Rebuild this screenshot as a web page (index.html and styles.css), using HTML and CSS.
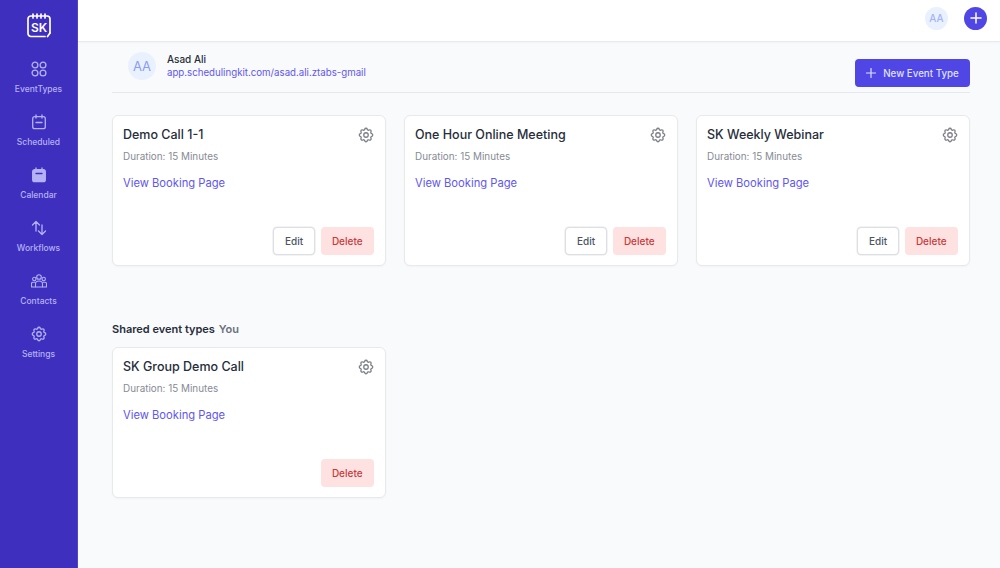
FILE: index.html
```html
<!DOCTYPE html>
<html lang="en">
<head>
<meta charset="utf-8">
<title>Event Types</title>
<link rel="stylesheet" href="styles.css">
</head>
<body>
<div class="app">
  <aside class="sidebar">
    <svg class="logo" width="26" height="26" viewBox="0 0 26 26" fill="none" stroke="#fff" stroke-width="1.700" stroke-linecap="round" stroke-linejoin="round">
      <path d="M19 23.500H5a3 3 0 0 1-3-3V6a3 3 0 0 1 3-3h16a3 3 0 0 1 3 3v14"/>
      <path d="M7 1v4M11 1v4M15 1v4M19 1v4"/>
      <path d="M24 20l-2.500 3.500"/>
      <text x="13" y="18.800" text-anchor="middle" class="logo-text">SK</text>
    </svg>
    <nav class="nav">
      <a class="nav-item">
        <svg width="16" height="16" viewBox="0 0 16 16" fill="none" stroke="currentColor" stroke-width="1.300"><circle cx="4" cy="4" r="2.900"/><circle cx="12" cy="4" r="2.900"/><circle cx="4" cy="12" r="2.900"/><circle cx="12" cy="12" r="2.900"/></svg>
        <span>EventTypes</span>
      </a>
      <a class="nav-item">
        <svg width="16" height="16" viewBox="0 0 16 16" fill="none" stroke="currentColor" stroke-width="1.300" stroke-linecap="round"><rect x="1.700" y="2.700" width="12.600" height="12" rx="2"/><path d="M5 1v3M11 1v3M5 8.500h6"/></svg>
        <span>Scheduled</span>
      </a>
      <a class="nav-item">
        <svg width="16" height="16" viewBox="0 0 16 16" fill="currentColor" stroke="currentColor" stroke-width="1.300" stroke-linecap="round"><rect x="1.700" y="2.700" width="12.600" height="12" rx="2"/><path d="M5 1v3M11 1v3"/><path d="M5 6.500h6" stroke="#3f2fbf"/></svg>
        <span>Calendar</span>
      </a>
      <a class="nav-item">
        <svg width="16" height="16" viewBox="0 0 16 16" fill="none" stroke="currentColor" stroke-width="1.300" stroke-linecap="round" stroke-linejoin="round"><path d="M5 11V1.500M1.500 5 5 1.500 8.500 5"/><path d="M11 5v9.500M7.500 11l3.500 3.500 3.500-3.500"/></svg>
        <span>Workflows</span>
      </a>
      <a class="nav-item">
        <svg width="16" height="16" viewBox="0 0 16 16" fill="none" stroke="currentColor" stroke-width="1.100" stroke-linejoin="round"><circle cx="8" cy="4" r="2.300"/><circle cx="3.300" cy="6" r="1.700"/><circle cx="12.700" cy="6" r="1.700"/><path d="M4.500 14v-3a3.500 3 0 0 1 7 0v3z"/><path d="M4.500 9.200H2a1.500 1.500 0 0 0-1.500 1.500V14h4M11.500 9.200H14a1.500 1.500 0 0 1 1.500 1.500V14h-4"/></svg>
        <span>Contacts</span>
      </a>
      <a class="nav-item">
        <svg class="nav-gear" width="18" height="18" viewBox="0 0 24 24" fill="none" stroke="currentColor" stroke-width="1.700"><path d="M10.325 4.317c.426-1.756 2.924-1.756 3.350 0a1.724 1.724 0 002.573 1.066c1.543-.94 3.310.826 2.370 2.370a1.724 1.724 0 001.065 2.572c1.756.426 1.756 2.924 0 3.350a1.724 1.724 0 00-1.066 2.573c.94 1.543-.826 3.310-2.370 2.370a1.724 1.724 0 00-2.572 1.065c-.426 1.756-2.924 1.756-3.350 0a1.724 1.724 0 00-2.573-1.066c-1.543.94-3.310-.826-2.370-2.370a1.724 1.724 0 00-1.065-2.572c-1.756-.426-1.756-2.924 0-3.350a1.724 1.724 0 001.066-2.573c-.94-1.543.826-3.310 2.370-2.370.996.608 2.296.07 2.572-1.065z"/><circle cx="12" cy="12" r="3"/></svg>
        <span>Settings</span>
      </a>
    </nav>
  </aside>
  <div class="body">
    <header class="topbar">
      <div class="avatar-small">AA</div>
      <button class="round-add" aria-label="Add">
        <svg width="12" height="12" viewBox="0 0 12 12" stroke="#fff" stroke-width="1.500" stroke-linecap="round"><path d="M6 1v10M1 6h10"/></svg>
      </button>
    </header>
    <main class="main">
      <section class="profile-row">
        <div class="profile">
          <div class="avatar">AA</div>
          <div class="profile-text">
            <div class="profile-name">Asad Ali</div>
            <a class="profile-link">app.schedulingkit.com/asad.ali.ztabs-gmail</a>
          </div>
        </div>
        <button class="new-btn">
          <svg width="10" height="10" viewBox="0 0 10 10" stroke="currentColor" stroke-width="1.200" stroke-linecap="round"><path d="M5 .5v9M.5 5h9"/></svg>
          New Event Type
        </button>
      </section>
      <section class="grid">
        <article class="card">
          <div class="card-head"><h3>Demo Call 1-1</h3>
            <svg class="cog" width="18" height="18" viewBox="0 0 24 24" fill="none" stroke="currentColor" stroke-width="1.700"><path d="M10.325 4.317c.426-1.756 2.924-1.756 3.350 0a1.724 1.724 0 002.573 1.066c1.543-.94 3.310.826 2.370 2.370a1.724 1.724 0 001.065 2.572c1.756.426 1.756 2.924 0 3.350a1.724 1.724 0 00-1.066 2.573c.94 1.543-.826 3.310-2.370 2.370a1.724 1.724 0 00-2.572 1.065c-.426 1.756-2.924 1.756-3.350 0a1.724 1.724 0 00-2.573-1.066c-1.543.94-3.310-.826-2.370-2.370a1.724 1.724 0 00-1.065-2.572c-1.756-.426-1.756-2.924 0-3.350a1.724 1.724 0 001.066-2.573c-.94-1.543.826-3.310 2.370-2.370.996.608 2.296.07 2.572-1.065z"/><circle cx="12" cy="12" r="3"/></svg>
          </div>
          <p class="duration">Duration: 15 Minutes</p>
          <a class="view">View Booking Page</a>
          <div class="actions"><button class="edit">Edit</button><button class="delete">Delete</button></div>
        </article>
        <article class="card">
          <div class="card-head"><h3>One Hour Online Meeting</h3>
            <svg class="cog" width="18" height="18" viewBox="0 0 24 24" fill="none" stroke="currentColor" stroke-width="1.700"><path d="M10.325 4.317c.426-1.756 2.924-1.756 3.350 0a1.724 1.724 0 002.573 1.066c1.543-.94 3.310.826 2.370 2.370a1.724 1.724 0 001.065 2.572c1.756.426 1.756 2.924 0 3.350a1.724 1.724 0 00-1.066 2.573c.94 1.543-.826 3.310-2.370 2.370a1.724 1.724 0 00-2.572 1.065c-.426 1.756-2.924 1.756-3.350 0a1.724 1.724 0 00-2.573-1.066c-1.543.94-3.310-.826-2.370-2.370a1.724 1.724 0 00-1.065-2.572c-1.756-.426-1.756-2.924 0-3.350a1.724 1.724 0 001.066-2.573c-.94-1.543.826-3.310 2.370-2.370.996.608 2.296.07 2.572-1.065z"/><circle cx="12" cy="12" r="3"/></svg>
          </div>
          <p class="duration">Duration: 15 Minutes</p>
          <a class="view">View Booking Page</a>
          <div class="actions"><button class="edit">Edit</button><button class="delete">Delete</button></div>
        </article>
        <article class="card">
          <div class="card-head"><h3>SK Weekly Webinar</h3>
            <svg class="cog" width="18" height="18" viewBox="0 0 24 24" fill="none" stroke="currentColor" stroke-width="1.700"><path d="M10.325 4.317c.426-1.756 2.924-1.756 3.350 0a1.724 1.724 0 002.573 1.066c1.543-.94 3.310.826 2.370 2.370a1.724 1.724 0 001.065 2.572c1.756.426 1.756 2.924 0 3.350a1.724 1.724 0 00-1.066 2.573c.94 1.543-.826 3.310-2.370 2.370a1.724 1.724 0 00-2.572 1.065c-.426 1.756-2.924 1.756-3.350 0a1.724 1.724 0 00-2.573-1.066c-1.543.94-3.310-.826-2.370-2.370a1.724 1.724 0 00-1.065-2.572c-1.756-.426-1.756-2.924 0-3.350a1.724 1.724 0 001.066-2.573c-.94-1.543.826-3.310 2.370-2.370.996.608 2.296.07 2.572-1.065z"/><circle cx="12" cy="12" r="3"/></svg>
          </div>
          <p class="duration">Duration: 15 Minutes</p>
          <a class="view">View Booking Page</a>
          <div class="actions"><button class="edit">Edit</button><button class="delete">Delete</button></div>
        </article>
      </section>
      <h2 class="shared-title">Shared event types <span>You</span></h2>
      <section class="grid">
        <article class="card">
          <div class="card-head"><h3>SK Group Demo Call</h3>
            <svg class="cog" width="18" height="18" viewBox="0 0 24 24" fill="none" stroke="currentColor" stroke-width="1.700"><path d="M10.325 4.317c.426-1.756 2.924-1.756 3.350 0a1.724 1.724 0 002.573 1.066c1.543-.94 3.310.826 2.370 2.370a1.724 1.724 0 001.065 2.572c1.756.426 1.756 2.924 0 3.350a1.724 1.724 0 00-1.066 2.573c.94 1.543-.826 3.310-2.370 2.370a1.724 1.724 0 00-2.572 1.065c-.426 1.756-2.924 1.756-3.350 0a1.724 1.724 0 00-2.573-1.066c-1.543.94-3.310-.826-2.370-2.370a1.724 1.724 0 00-1.065-2.572c-1.756-.426-1.756-2.924 0-3.350a1.724 1.724 0 001.066-2.573c-.94-1.543.826-3.310 2.370-2.370.996.608 2.296.07 2.572-1.065z"/><circle cx="12" cy="12" r="3"/></svg>
          </div>
          <p class="duration">Duration: 15 Minutes</p>
          <a class="view">View Booking Page</a>
          <div class="actions"><button class="delete">Delete</button></div>
        </article>
      </section>
    </main>
  </div>
</div>
</body>
</html>
```
FILE: styles.css
```css
* { box-sizing: border-box; }
html, body { margin: 0; height: 100%; overflow: hidden; }
body { font-family: Inter, "Liberation Sans", sans-serif; background: #f9fafb; color: #1f2937; }
.app { display: flex; height: 568px; }

.sidebar { width: 78px; flex: none; background: #3f2fbf; display: flex; flex-direction: column; align-items: center; padding-top: 13px; border-right: 1px solid #4f46c8; }
.logo { display: block; }
.logo-text { font-family: Inter, sans-serif; font-size: 12px; font-weight: 600; fill: #fff; stroke: none; }
.nav { display: flex; flex-direction: column; margin-top: 17px; width: 100%; }
.nav-item { height: 53px; display: flex; flex-direction: column; align-items: center; padding-top: 5px; gap: 6px; color: #b4b2f5; font-size: 8.500px; font-weight: 500; line-height: 13px; }
.nav-item svg { display: block; }
.nav-item .nav-gear { margin: -1px; }

.body { flex: 1; min-width: 0; display: flex; flex-direction: column; }
.topbar { height: 42px; flex: none; background: #fff; border-bottom: 1px solid #e9eaee; display: flex; align-items: center; justify-content: flex-end; gap: 16px; padding: 0 13px 5px 0; box-shadow: 0 1px 2px rgba(0,0,0,.03); }
.avatar-small { width: 23px; height: 23px; border-radius: 50%; background: #eaf1fe; color: #a5b4f8; font-size: 10px; font-weight: 500; display: flex; align-items: center; justify-content: center; }
.round-add { width: 23px; height: 23px; border-radius: 50%; border: 0; padding: 0; background: #4f46e5; display: flex; align-items: center; justify-content: center; }

.main { padding: 0 30px 0 34px; }
.profile-row { height: 51px; border-bottom: 1px solid #e7e8ec; display: flex; justify-content: space-between; align-items: flex-start; padding: 10px 0 0 16px; }
.profile { display: flex; gap: 11px; }
.avatar { width: 28px; height: 28px; border-radius: 50%; background: #eaf1fe; color: #8b9cf6; font-size: 13px; font-weight: 400; display: flex; align-items: center; justify-content: center; }
.profile-name { font-size: 10px; font-weight: 500; line-height: 14px; color: #262d3a; }
.profile-link { display: block; font-size: 9.700px; line-height: 14px; color: #6157ee; }
.new-btn { width: 115px; height: 28px; margin-top: 7px; border: 0; border-radius: 4px; background: #4f46e5; color: #dfe0fc; font-family: inherit; font-size: 9.750px; font-weight: 500; display: flex; align-items: center; justify-content: center; gap: 7px; padding: 0; }

.grid { display: grid; grid-template-columns: repeat(3, 274px); gap: 18px; margin-top: 22px; }
.card { height: 151px; background: #fff; border: 1px solid #e8e9ed; border-radius: 6px; padding: 10px 11px 10px 10px; display: flex; flex-direction: column; box-shadow: 0 1px 2px rgba(0,0,0,.03); }
.card-head { display: flex; justify-content: space-between; align-items: center; height: 18px; }
.card-head h3 { margin: 0; font-size: 12.500px; font-weight: 500; line-height: 18px; color: #262d3a; }
.cog { color: #7b7f87; margin-right: -1px; }
.duration { margin: 5px 0 0; font-size: 9.900px; line-height: 14px; color: #868b95; }
.view { margin-top: 12px; font-size: 11.200px; line-height: 16px; color: #6157ee; }
.actions { margin-top: auto; display: flex; justify-content: flex-end; gap: 5.500px; }
.actions button { height: 28px; font-family: inherit; font-size: 10px; font-weight: 500; border-radius: 4px; padding: 0; }
.edit { width: 42px; background: #fff; border: 1px solid #dedfe3; color: #4b5563; box-shadow: 0 0 0 .5px #e5e7eb; }
.delete { width: 53.500px; background: #fee2e2; border: 0; color: #c93a3a; }

.shared-title { margin: 55px 0 0; font-size: 11px; line-height: 16px; font-weight: 600; color: #262d3a; }
.shared-title span { color: #6b7280; margin-left: 1px; }
.shared-title + .grid { margin-top: 10px; }
```
